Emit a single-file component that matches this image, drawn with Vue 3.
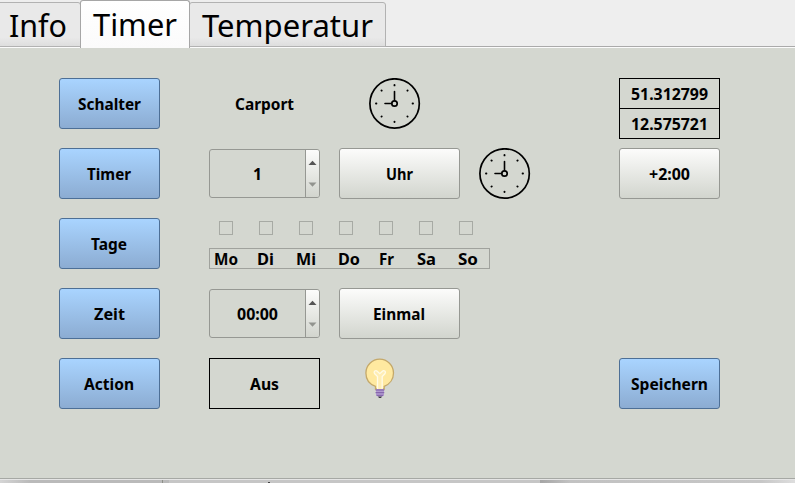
<script setup>
import { h } from 'vue'

const Label = (props) =>
  h('svg', { class: 'label', width: props.w, height: 20 }, [
    h('text', { x: 0, y: 16, textLength: props.w, lengthAdjust: 'spacingAndGlyphs' }, props.text),
  ])
Label.props = ['text', 'w']

const ClockIcon = () =>
  h('svg', { class: 'clock', width: 52, height: 52, viewBox: '0 0 52 52' }, [
    h('circle', { cx: 25.6, cy: 25.5, r: 24.7, fill: 'none', stroke: '#000', 'stroke-width': 1.7 }),
    h('path', { d: 'M25.5 13.500v9M16 25.5h6.500', stroke: '#000', 'stroke-width': 1.6, 'stroke-linecap': 'round' }),
    h('circle', { cx: 25.5, cy: 25.5, r: 2.7, fill: 'none', stroke: '#000', 'stroke-width': 1.7 }),
    h('path', {
      d: 'M25.5 7v.4M25.5 43.600v.4M7 25.5h.4M43.600 25.5h.4M12.5 12.5l.2.2M38.4 38.4l.2.2M38.600 12.5l-.2.2M12.7 38.4l-.2.2',
      stroke: '#000', 'stroke-width': 1.9, 'stroke-linecap': 'round',
    }),
  ])

const tabs = [
  { text: 'Info', w: 58, name: 'info' },
  { text: 'Timer', w: 84, name: 'timer' },
  { text: 'Temperatur', w: 171, name: 'temp' },
]
const days = [
  { text: 'Mo', x: 5, w: 24 },
  { text: 'Di', x: 48, w: 17 },
  { text: 'Mi', x: 87, w: 20 },
  { text: 'Do', x: 129, w: 22 },
  { text: 'Fr', x: 170, w: 15 },
  { text: 'Sa', x: 208, w: 19 },
  { text: 'So', x: 249, w: 20 },
]
</script>

<template>
  <div class="window">
    <nav class="tabs">
      <div v-for="t in tabs" :key="t.name" class="tab" :class="t.name">
        <svg class="tab-label" :width="t.w" height="44">
          <text x="0" y="34" :textLength="t.w" lengthAdjust="spacingAndGlyphs">{{ t.text }}</text>
        </svg>
      </div>
    </nav>
    <main class="panel">
      <button class="btn blue"><Label text="Schalter" w="63" /></button>
      <div class="plain"><Label text="Carport" w="59" /></div>
      <div class="clock-cell"><ClockIcon /></div>
      <span></span>
      <div class="coords">
        <div><Label text="51.312799" w="77" /></div>
        <div><Label text="12.575721" w="77" /></div>
      </div>

      <button class="btn blue"><Label text="Timer" w="44" /></button>
      <div class="spin">
        <div class="value"><Label text="1" w="9" /></div>
        <svg class="steps" width="13" height="47"><path d="M2.500 15h8L6.500 10.800z" fill="#555" /><path d="M2.500 32.500h8L6.500 36.700z" fill="#92948f" /></svg>
      </div>
      <button class="btn"><Label text="Uhr" w="27" /></button>
      <div><ClockIcon /></div>
      <button class="btn"><Label text="+2:00" w="41" /></button>

      <button class="btn blue"><Label text="Tage" w="36" /></button>
      <div class="week">
        <div class="checks"><i v-for="d in days" :key="d.text"></i></div>
        <svg class="days" width="281" height="21">
          <rect x=".5" y=".5" width="280" height="20" fill="none" stroke="#a0a29d" />
          <text v-for="d in days" :key="d.text" :x="d.x" y="17" :textLength="d.w" lengthAdjust="spacingAndGlyphs">{{ d.text }}</text>
        </svg>
      </div>
      <span></span>

      <button class="btn blue"><Label text="Zeit" w="31" /></button>
      <div class="spin">
        <div class="value"><Label text="00:00" w="41" /></div>
        <svg class="steps" width="13" height="47"><path d="M2.500 15h8L6.500 10.800z" fill="#555" /><path d="M2.500 32.500h8L6.500 36.700z" fill="#92948f" /></svg>
      </div>
      <button class="btn"><Label text="Einmal" w="52" /></button>
      <span></span>
      <span></span>

      <button class="btn blue"><Label text="Action" w="50" /></button>
      <div class="framed"><Label text="Aus" w="29" /></div>
      <div class="bulb">
        <svg width="30" height="41" viewBox="0 0 30 41">
          <path d="M10.5 31v-2.6C4.7 26.3.9 21.200.9 15A13.8 13.8 0 0 1 28.5 15c0 6.200-3.800 11.300-9.300 13.400V31z" fill="#ffe9a0" stroke="#c4a869" stroke-width="1.300" />
          <path d="M12.500 31V18.500L9.500 15.500c-1.300-2 1.200-3.800 2.700-2.300l2.600 2.500 2.600-2.500c1.500-1.500 4 .3 2.700 2.300L17.200 18.500V31" fill="#ffeeb5" stroke="#fffbe8" stroke-width="1.300" />
          <path d="M11 31h8v6l-1.500 1.500h-5L11 37z" fill="#b29bd0" />
          <path d="M10.500 32h8.800M10.500 34.700h8.800M11.500 37.300h6.800" stroke="#7d5ca5" stroke-width="1" />
          <path d="M13 38.500h4l-1 1.500h-2z" fill="#3c3845" />
        </svg>
      </div>
      <span></span>
      <button class="btn blue"><Label text="Speichern" w="77" /></button>
    </main>
    <footer class="edge"><i class="a"></i><i class="b"></i><i class="mark"></i><i class="c"></i><i class="d"></i></footer>
  </div>
</template>

<style>
body { margin: 0; overflow: hidden; }
</style>

<style scoped>
.window {
  width: 795px;
  height: 483px;
  overflow: hidden;
  display: flex;
  flex-direction: column;
  background: #d4d7d0;
  font-family: "Noto Sans", "Open Sans", sans-serif;
}
.tabs {
  display: flex;
  align-items: flex-end;
  height: 48px;
  box-sizing: border-box;
  background: linear-gradient(#eee 46px, #aaa 46px, #aaa 47px, #fbfbfb 47px);
}
.tab {
  box-sizing: border-box;
  height: 45px;
  margin-bottom: 1px;
  border: 1px solid #b2b2b2;
  border-radius: 3px 3px 0 0;
  background: linear-gradient(#e9e9e9 80%, #dedede);
}
.info { width: 84px; margin-left: -3px; padding-left: 11px; }
.timer {
  width: 110px;
  height: 48px;
  margin: 0 -1px 0 -1px;
  padding: 1px 0 0 12px;
  border-color: #a6a6a6;
  border-bottom: 0;
  background: linear-gradient(#fff, #fbfbfb);
  z-index: 1;
}
.temp { width: 197px; padding-left: 12px; }
.tab-label { display: block; font-size: 30.5px; overflow: visible; }
.panel {
  flex: none;
  height: 430px;
  box-sizing: border-box;
  padding: 30px 0 0 59px;
  display: grid;
  grid-template-columns: 131px 111px 121px 121px 101px;
  grid-template-rows: repeat(5, 51px);
  gap: 19px;
}
.label { display: block; margin-right: 1px; font-size: 16px; font-weight: 700; overflow: visible; }
.btn {
  height: 51px;
  padding: 0;
  display: flex;
  align-items: center;
  justify-content: center;
  border: 1px solid #969893;
  border-radius: 3px;
  background: linear-gradient(#fcfcfb, #d2d5ce);
  font-family: inherit;
  color: #000;
}
.blue {
  width: 101px;
  border-color: #4d6f96;
  background: linear-gradient(#a9d4ff, #8cacd2);
}
.plain, .framed { display: flex; align-items: center; justify-content: center; }
.framed { border: 1px solid #000; }
.clock-cell { padding-left: 30px; }
.clock { display: block; }
.coords { height: 61px; box-sizing: border-box; border: 1px solid #000; }
.coords > div { height: 29px; display: flex; align-items: center; justify-content: center; }
.coords .label { margin-right: 0; }
.coords > div + div { border-top: 1px solid #000; }
.spin {
  height: 49px;
  margin-top: 1px;
  box-sizing: border-box;
  display: flex;
  border: 1px solid #969893;
  border-radius: 3px;
  overflow: hidden;
}
.value { width: 95px; display: flex; align-items: center; justify-content: center; }
.steps { border-left: 1px solid #969893; background: linear-gradient(#fcfcfb, #d2d5ce); }
.week { grid-column: 2 / 5; padding-top: 3px; }
.checks { display: flex; gap: 26px; padding-left: 10px; }
.checks i { width: 12px; height: 12px; border: 1px solid #a7aaa4; }
.days { display: block; margin-top: 13px; font-size: 16px; font-weight: 700; }
.bulb { padding-left: 26px; }
.bulb svg { display: block; }
.edge {
  height: 5px;
  box-sizing: border-box;
  border-top: 1px solid #a6a8a4;
  background: linear-gradient(#e5e5e5 1px, #c6c6c6 1px);
  padding-top: 1px;
  display: flex;
}
.edge i { height: 3px; }
.a { width: 162px; background: linear-gradient(90deg, #d5d5d5, #bababa 30px); }
.b { width: 106px; background: linear-gradient(90deg, #8d8f88 1px, #bababa 1px, #bababa 7px, #c6c6c6 7px); }
.edge .mark { width: 2px; height: 1px; margin-top: 2px; background: #444; }
.c { width: 270px; }
.d { width: 255px; background: linear-gradient(90deg, #a5a5a5, #c2c2c2 30px, #c6c6c6 220px, #dedede); }
</style>
